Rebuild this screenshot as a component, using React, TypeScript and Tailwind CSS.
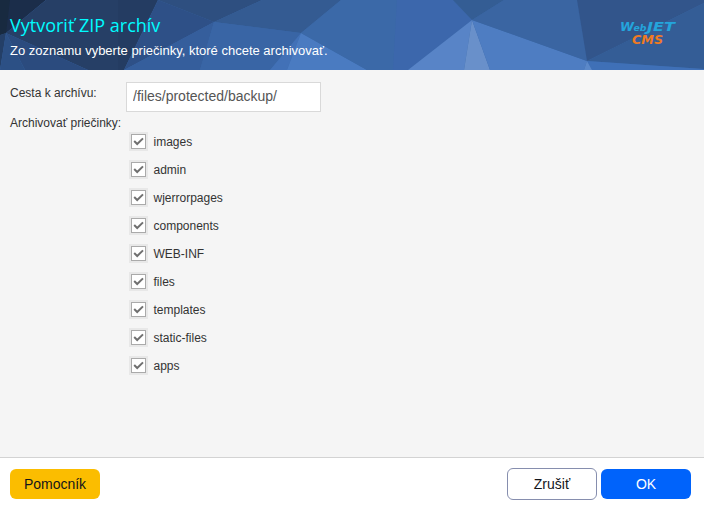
const folders = [
  'images',
  'admin',
  'wjerrorpages',
  'components',
  'WEB-INF',
  'files',
  'templates',
  'static-files',
  'apps',
];

function HeaderPattern() {
  return (
    <svg className="absolute inset-0 h-full w-full" viewBox="0 0 704 70" preserveAspectRatio="none" aria-hidden="true">
      <rect width="704" height="70" fill="#3b69a8" />
      <polygon points="0,0 46,0 6,33 0,35" fill="#1b2d4a" />
      <polygon points="0,0 10,0 6,33 0,35" fill="#182a40" />
      <polygon points="0,35 6,33 0,70" fill="#243f67" />
      <polygon points="46,0 118,0 118,70 88,70 6,33" fill="#263f66" />
      <polygon points="118,0 158,0 124,70 118,70" fill="#243c62" />
      <polygon points="6,33 88,70 25,70" fill="#2b4b7e" />
      <polygon points="6,33 25,70 0,70" fill="#2c5085" />
      <polygon points="158,0 214,22 124,70" fill="#2e5087" />
      <polygon points="158,0 262,0 214,22" fill="#2e4f80" />
      <polygon points="262,0 341,0 301,33 214,22" fill="#345b92" />
      <polygon points="214,22 200,70 124,70" fill="#355e9c" />
      <polygon points="214,22 301,33 270,70 200,70" fill="#3965a5" />
      <polygon points="301,33 287,70 270,70" fill="#4271b7" />
      <polygon points="301,33 367,70 287,70" fill="#4a7bc1" />
      <polygon points="341,0 397,0 393,70 367,70 301,33" fill="#3b69a8" />
      <polygon points="397,0 453,0 472,20 408,70 393,70" fill="#3c67ac" />
      <polygon points="453,0 504,0 472,20" fill="#345d94" />
      <polygon points="472,20 464,70 408,70" fill="#5884c7" />
      <polygon points="472,20 490,70 464,70" fill="#6990ca" />
      <polygon points="472,20 587,61 584,70 490,70" fill="#4e7dc2" />
      <polygon points="504,0 577,0 587,61 472,20" fill="#3a65a2" />
      <polygon points="577,0 704,0 704,3 587,61" fill="#32558b" />
      <polygon points="587,61 704,3 704,69" fill="#345d96" />
      <polygon points="587,61 704,69 704,70 592,70" fill="#3f70b7" />
      <polygon points="587,61 592,70 584,70" fill="#5b88c9" />
    </svg>
  );
}

function Logo() {
  return (
    <svg className="relative h-7 w-[60px]" viewBox="0 0 60 28" aria-label="WebJET CMS">
      <g fontFamily="'DejaVu Sans', sans-serif" fontWeight="700" fontStyle="italic">
        <g fill="#24a5dc">
          <text x="1" y="12" fontSize="12.5" textLength="14" lengthAdjust="spacingAndGlyphs">W</text>
          <text x="14.5" y="12" fontSize="9" textLength="13" lengthAdjust="spacingAndGlyphs">eb</text>
          <text x="28" y="12" fontSize="12.5" textLength="28" lengthAdjust="spacingAndGlyphs">JET</text>
        </g>
        <text x="13" y="25" fontSize="13" fill="#f07a22" textLength="31" lengthAdjust="spacingAndGlyphs">CMS</text>
      </g>
    </svg>
  );
}

function FolderOption({ name }: { name: string }) {
  return (
    <label className="flex h-7 items-start">
      <span className="mt-1 flex size-[19px] items-center justify-center bg-[#e8e8e8]">
        <span className="flex size-[15px] items-center justify-center border border-[#aaa] bg-white">
          <svg className="size-[13px]" viewBox="0 0 13 13" fill="none" stroke="#707070" strokeWidth="2" aria-hidden="true">
            <path d="M2.2 6 5.2 9 11 3.4" />
          </svg>
        </span>
      </span>
      <span className="ml-[5.5px] leading-7">{name}</span>
    </label>
  );
}

export default function App() {
  return (
    <div className="flex h-[510px] w-[704px] flex-col overflow-hidden bg-[#f5f5f5] font-['Liberation_Sans',Arial,sans-serif] text-xs text-[#333]">
      <header className="relative flex h-[70px] shrink-0 justify-between pr-[25px] pl-2.5">
        <HeaderPattern />
        <div className="relative pt-3">
          <h1 className="font-['Open_Sans','Noto_Sans',sans-serif] text-[18px] leading-[26px] text-[#00fcff]">Vytvoriť ZIP archív</h1>
          <p className="pt-1 text-[13px] leading-[18px] text-white">Zo zoznamu vyberte priečinky, ktoré chcete archivovať.</p>
        </div>
        <div className="pt-[19px]">
          <Logo />
        </div>
      </header>
      <main className="flex-1 px-2.5 pt-3">
        <div className="flex h-[30px]">
          <label htmlFor="archive-path" className="w-[116px] pt-[3px] leading-4">Cesta k archívu:</label>
          <input
            id="archive-path"
            className="h-[30px] w-[195px] border border-[#d9d9d9] bg-white px-1.5 pb-0.5 text-sm text-[#555]"
            defaultValue="/files/protected/backup/"
          />
        </div>
        <div className="flex">
          <div className="w-[119px] shrink-0 pt-[3px] leading-4 whitespace-nowrap">Archivovať priečinky:</div>
          <div className="pt-4">
            {folders.map((name) => (
              <FolderOption key={name} name={name} />
            ))}
          </div>
        </div>
      </main>
      <footer className="flex h-[53px] shrink-0 items-center border-t border-[#d3d3d3] bg-white pr-[13px] pl-2.5 text-sm">
        <button className="h-[30px] w-[90px] rounded-md bg-[#fbbd00] text-[#13151b]">Pomocník</button>
        <button className="ml-auto h-8 w-[90px] rounded-md border border-[#868eae] bg-white text-[#13151b]">Zrušiť</button>
        <button className="ml-1 h-[30px] w-[90px] rounded-md bg-[#0063fb] text-white">OK</button>
      </footer>
    </div>
  );
}
